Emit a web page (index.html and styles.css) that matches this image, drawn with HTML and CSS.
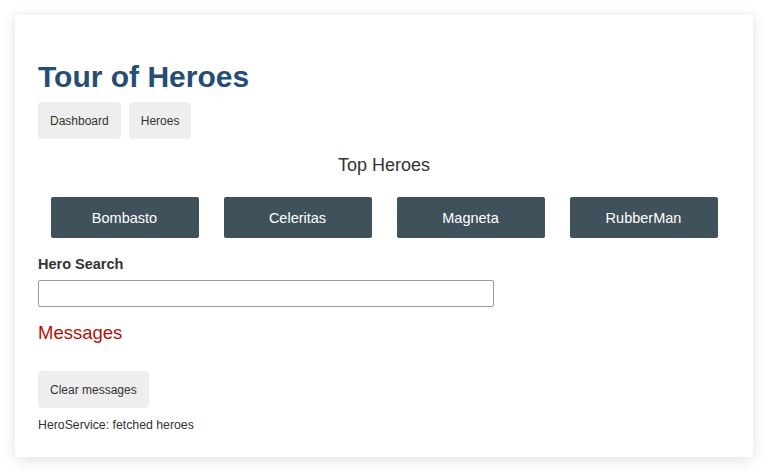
FILE: index.html
```html
<!DOCTYPE html>
<html>
<head>
<meta charset="utf-8">
<link rel="stylesheet" href="styles.css">
</head>
<body>
<div class="card">
  <h1 class="title">Tour of Heroes</h1>
  <nav class="nav">
    <a class="nav-btn">Dashboard</a>
    <a class="nav-btn">Heroes</a>
  </nav>
  <h2 class="top-title">Top Heroes</h2>
  <div class="heroes-menu">
    <div class="hero-cell"><a class="hero-btn">Bombasto</a></div>
    <div class="hero-cell"><a class="hero-btn">Celeritas</a></div>
    <div class="hero-cell"><a class="hero-btn">Magneta</a></div>
    <div class="hero-cell"><a class="hero-btn">RubberMan</a></div>
  </div>
  <label class="search-label" for="search">Hero Search</label>
  <input class="search-box" id="search" type="text">
  <h2 class="messages-title">Messages</h2>
  <button class="clear-btn">Clear messages</button>
  <div class="message">HeroService: fetched heroes</div>
</div>
</body>
</html>
```

FILE: styles.css
```css
html, body {
  margin: 0;
  background: #fff;
}
body {
  padding: 15px;
  font-family: "Liberation Sans", Arial, sans-serif;
  color: #333;
}
.card {
  width: 738px;
  height: 442px;
  box-sizing: border-box;
  padding: 44px 23px 0;
  background: #fff;
  box-shadow: 0 2px 14px rgba(0, 0, 0, 0.13);
  display: flex;
  flex-direction: column;
  align-items: flex-start;
}
.title {
  margin: 0;
  font-size: 30px;
  line-height: 36px;
  font-weight: bold;
  color: #264d73;
}
.nav {
  display: flex;
  gap: 8px;
  margin-top: 7px;
}
.nav-btn, .clear-btn {
  display: flex;
  align-items: center;
  height: 37px;
  padding: 0 12px;
  background: #eee;
  border-radius: 4px;
  font-size: 12px;
  color: #333;
}
.top-title {
  align-self: stretch;
  text-align: center;
  margin: 15px 0 0;
  font-size: 18px;
  line-height: 22px;
  font-weight: normal;
  color: #333;
}
.heroes-menu {
  align-self: stretch;
  display: grid;
  grid-template-columns: repeat(4, 1fr);
  margin-top: 21px;
}
.hero-cell {
  display: flex;
  justify-content: center;
}
.hero-btn {
  width: 148px;
  height: 41px;
  display: flex;
  align-items: center;
  justify-content: center;
  background: #3f525c;
  border-radius: 2px;
  color: #fff;
  font-size: 14.5px;
}
.search-label {
  margin-top: 17px;
  font-size: 14.5px;
  line-height: 18px;
  font-weight: bold;
  color: #333;
}
.search-box {
  margin: 7px 0 0;
  width: 456px;
  height: 27px;
  box-sizing: border-box;
  border: 1px solid #999;
  border-radius: 2px;
  padding: 0 4px;
  font-family: inherit;
}
.messages-title {
  margin: 14px 0 0;
  font-size: 18.5px;
  line-height: 24px;
  font-weight: normal;
  color: #b3120a;
}
.clear-btn {
  margin-top: 26px;
  border: none;
  font-family: inherit;
}
.message {
  margin-top: 9px;
  font-size: 12.3px;
  line-height: 16px;
  color: #333;
}
```
